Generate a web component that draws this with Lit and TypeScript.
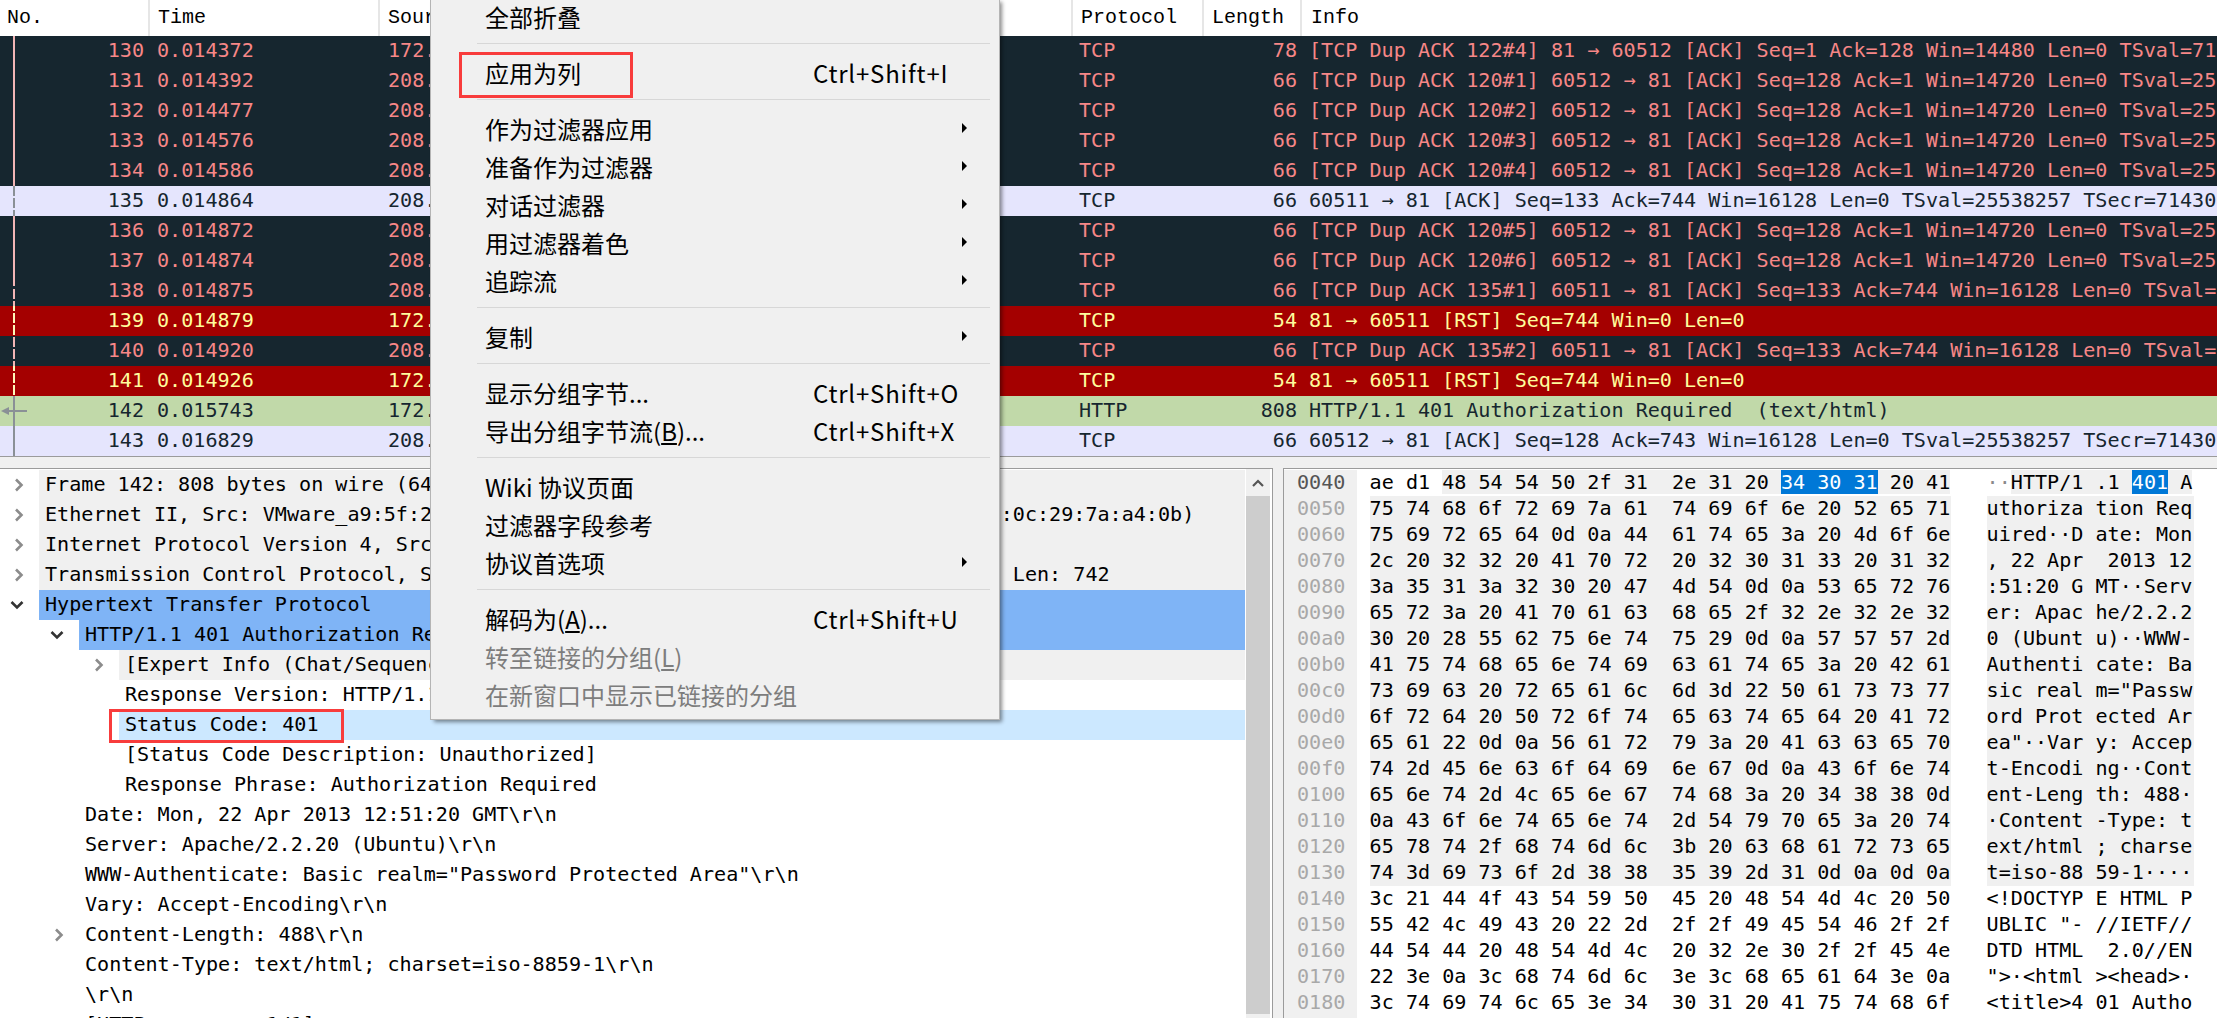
import { LitElement, html, svg, css, nothing } from "lit";
import { customElement } from "lit/decorators.js";

type Pkt = { no: number; time: string; src: string; dst: string; proto: string; len: number; info: string; kind: string };

const A = "172.16.122.128";
const B = "208.80.152.201";
const dup = (n: string, f: string) => `[TCP Dup ACK ${n}] ${f}`;
const s12 = "60512 \u2192 81 [ACK] Seq=128 Ack=1 Win=14720 Len=0 TSval=25538257 TSecr=7143000";
const s11 = "60511 \u2192 81 [ACK] Seq=133 Ack=744 Win=16128 Len=0 TSval=25538257 TSecr=7143000";

const packets: Pkt[] = [
  { no: 130, time: "0.014372", src: A, dst: B, proto: "TCP", len: 78, info: dup("122#4", "81 \u2192 60512 [ACK] Seq=1 Ack=128 Win=14480 Len=0 TSval=7143000 TSecr=25538257"), kind: "bad" },
  { no: 131, time: "0.014392", src: B, dst: A, proto: "TCP", len: 66, info: dup("120#1", s12), kind: "bad" },
  { no: 132, time: "0.014477", src: B, dst: A, proto: "TCP", len: 66, info: dup("120#2", s12), kind: "bad" },
  { no: 133, time: "0.014576", src: B, dst: A, proto: "TCP", len: 66, info: dup("120#3", s12), kind: "bad" },
  { no: 134, time: "0.014586", src: B, dst: A, proto: "TCP", len: 66, info: dup("120#4", s12), kind: "bad" },
  { no: 135, time: "0.014864", src: B, dst: A, proto: "TCP", len: 66, info: "60511 \u2192 81 [ACK] Seq=133 Ack=744 Win=16128 Len=0 TSval=25538257 TSecr=7143000", kind: "tcp" },
  { no: 136, time: "0.014872", src: B, dst: A, proto: "TCP", len: 66, info: dup("120#5", s12), kind: "bad" },
  { no: 137, time: "0.014874", src: B, dst: A, proto: "TCP", len: 66, info: dup("120#6", s12), kind: "bad" },
  { no: 138, time: "0.014875", src: B, dst: A, proto: "TCP", len: 66, info: dup("135#1", s11), kind: "bad" },
  { no: 139, time: "0.014879", src: A, dst: B, proto: "TCP", len: 54, info: "81 \u2192 60511 [RST] Seq=744 Win=0 Len=0", kind: "rst" },
  { no: 140, time: "0.014920", src: B, dst: A, proto: "TCP", len: 66, info: dup("135#2", s11), kind: "bad" },
  { no: 141, time: "0.014926", src: A, dst: B, proto: "TCP", len: 54, info: "81 \u2192 60511 [RST] Seq=744 Win=0 Len=0", kind: "rst" },
  { no: 142, time: "0.015743", src: A, dst: B, proto: "HTTP", len: 808, info: "HTTP/1.1 401 Authorization Required  (text/html)", kind: "http" },
  { no: 143, time: "0.016829", src: B, dst: A, proto: "TCP", len: 66, info: "60512 \u2192 81 [ACK] Seq=128 Ack=743 Win=16128 Len=0 TSval=25538257 TSecr=7143000", kind: "tcp" },
];

type Tree = { t: string; lv: number; arrow?: "r" | "d"; bg?: string };
const tree: Tree[] = [
  { t: "Frame 142: 808 bytes on wire (6464 bits), 808 bytes captured (6464 bits)", lv: 0, arrow: "r", bg: "grey" },
  { t: "Ethernet II, Src: VMware_a9:5f:2e (00:0c:29:a9:5f:2e), Dst: VMware_7a:a4:0b (00:0c:29:7a:a4:0b)", lv: 0, arrow: "r", bg: "grey" },
  { t: "Internet Protocol Version 4, Src: 172.16.122.128, Dst: 172.16.122.1", lv: 0, arrow: "r", bg: "grey" },
  { t: "Transmission Control Protocol, Src Port: 81, Dst Port: 60512, Seq: 1, Ack: 128, Len: 742", lv: 0, arrow: "r", bg: "grey" },
  { t: "Hypertext Transfer Protocol", lv: 0, arrow: "d", bg: "blue" },
  { t: "HTTP/1.1 401 Authorization Required\\r\\n", lv: 1, arrow: "d", bg: "blue" },
  { t: "[Expert Info (Chat/Sequence): HTTP/1.1 401 Authorization Required\\r\\n]", lv: 2, arrow: "r", bg: "grey" },
  { t: "Response Version: HTTP/1.1", lv: 2 },
  { t: "Status Code: 401", lv: 2, bg: "pale" },
  { t: "[Status Code Description: Unauthorized]", lv: 2 },
  { t: "Response Phrase: Authorization Required", lv: 2 },
  { t: "Date: Mon, 22 Apr 2013 12:51:20 GMT\\r\\n", lv: 1 },
  { t: "Server: Apache/2.2.20 (Ubuntu)\\r\\n", lv: 1 },
  { t: 'WWW-Authenticate: Basic realm="Password Protected Area"\\r\\n', lv: 1 },
  { t: "Vary: Accept-Encoding\\r\\n", lv: 1 },
  { t: "Content-Length: 488\\r\\n", lv: 1, arrow: "r" },
  { t: "Content-Type: text/html; charset=iso-8859-1\\r\\n", lv: 1 },
  { t: "\\r\\n", lv: 1 },
  { t: "[HTTP response 1/1]", lv: 1 },
];

const hexRows: [string, string, string, string][] = [
  ["0040", "ae d1 48 54 54 50 2f 31", "2e 31 20 34 30 31 20 41", "\u00b7\u00b7HTTP/1 .1 401 A"],
  ["0050", "75 74 68 6f 72 69 7a 61", "74 69 6f 6e 20 52 65 71", "uthoriza tion Req"],
  ["0060", "75 69 72 65 64 0d 0a 44", "61 74 65 3a 20 4d 6f 6e", "uired\u00b7\u00b7D ate: Mon"],
  ["0070", "2c 20 32 32 20 41 70 72", "20 32 30 31 33 20 31 32", ", 22 Apr  2013 12"],
  ["0080", "3a 35 31 3a 32 30 20 47", "4d 54 0d 0a 53 65 72 76", ":51:20 G MT\u00b7\u00b7Serv"],
  ["0090", "65 72 3a 20 41 70 61 63", "68 65 2f 32 2e 32 2e 32", "er: Apac he/2.2.2"],
  ["00a0", "30 20 28 55 62 75 6e 74", "75 29 0d 0a 57 57 57 2d", "0 (Ubunt u)\u00b7\u00b7WWW-"],
  ["00b0", "41 75 74 68 65 6e 74 69", "63 61 74 65 3a 20 42 61", "Authenti cate: Ba"],
  ["00c0", "73 69 63 20 72 65 61 6c", "6d 3d 22 50 61 73 73 77", 'sic real m="Passw'],
  ["00d0", "6f 72 64 20 50 72 6f 74", "65 63 74 65 64 20 41 72", "ord Prot ected Ar"],
  ["00e0", "65 61 22 0d 0a 56 61 72", "79 3a 20 41 63 63 65 70", 'ea"\u00b7\u00b7Var y: Accep'],
  ["00f0", "74 2d 45 6e 63 6f 64 69", "6e 67 0d 0a 43 6f 6e 74", "t-Encodi ng\u00b7\u00b7Cont"],
  ["0100", "65 6e 74 2d 4c 65 6e 67", "74 68 3a 20 34 38 38 0d", "ent-Leng th: 488\u00b7"],
  ["0110", "0a 43 6f 6e 74 65 6e 74", "2d 54 79 70 65 3a 20 74", "\u00b7Content -Type: t"],
  ["0120", "65 78 74 2f 68 74 6d 6c", "3b 20 63 68 61 72 73 65", "ext/html ; charse"],
  ["0130", "74 3d 69 73 6f 2d 38 38", "35 39 2d 31 0d 0a 0d 0a", "t=iso-88 59-1\u00b7\u00b7\u00b7\u00b7"],
  ["0140", "3c 21 44 4f 43 54 59 50", "45 20 48 54 4d 4c 20 50", "<!DOCTYP E HTML P"],
  ["0150", "55 42 4c 49 43 20 22 2d", "2f 2f 49 45 54 46 2f 2f", 'UBLIC "- //IETF//'],
  ["0160", "44 54 44 20 48 54 4d 4c", "20 32 2e 30 2f 2f 45 4e", "DTD HTML  2.0//EN"],
  ["0170", "22 3e 0a 3c 68 74 6d 6c", "3e 3c 68 65 61 64 3e 0a", '">\u00b7<html ><head>\u00b7'],
  ["0180", "3c 74 69 74 6c 65 3e 34", "30 31 20 41 75 74 68 6f", "<title>4 01 Autho"],
];

type MenuEntry = { label?: unknown; key?: string; sub?: boolean; off?: boolean; sep?: boolean };
const menu: MenuEntry[] = [
  { label: "全部折叠" },
  { sep: true },
  { label: "应用为列", key: "Ctrl+Shift+I" },
  { sep: true },
  { label: "作为过滤器应用", sub: true },
  { label: "准备作为过滤器", sub: true },
  { label: "对话过滤器", sub: true },
  { label: "用过滤器着色", sub: true },
  { label: "追踪流", sub: true },
  { sep: true },
  { label: "复制", sub: true },
  { sep: true },
  { label: "显示分组字节...", key: "Ctrl+Shift+O" },
  { label: html`导出分组字节流(<u>B</u>)...`, key: "Ctrl+Shift+X" },
  { sep: true },
  { label: "Wiki 协议页面" },
  { label: "过滤器字段参考" },
  { label: "协议首选项", sub: true },
  { sep: true },
  { label: html`解码为(<u>A</u>)...`, key: "Ctrl+Shift+U" },
  { label: html`转至链接的分组(<u>L</u>)`, off: true },
  { label: "在新窗口中显示已链接的分组", off: true },
];

@customElement("app-root")
export class AppRoot extends LitElement {
  static styles = css`
    :host {
      display: block;
      position: relative;
      width: 2217px;
      height: 1018px;
      overflow: hidden;
      background: #f0f0f0;
      font-family: "DejaVu Sans Mono", "Liberation Mono", monospace;
      font-size: 20.1px;
      color: #000;
    }
    .page { display: flex; flex-direction: column; height: 100%; }

    .cols { display: grid; grid-template-columns: 150px 230px 693px 131px 98px 1fr; }
    .head { height: 36px; background: #fff; font-family: "Liberation Mono", monospace; font-size: 20px; }
    .head div { border-right: 2px solid #e6e6e6; box-sizing: border-box; line-height: 36px; padding-left: 8px; white-space: pre; overflow: hidden; }
    .head div:last-child { border-right: 0; padding-left: 9px; }
    .head .first { padding-left: 7px; }

    .list { position: relative; flex: none; }
    .row { height: 30px; line-height: 28px; white-space: pre; overflow: hidden; }
    .row > div { overflow: hidden; }
    .row .no { text-align: right; padding-right: 6px; }
    .row .time { padding-left: 7px; }
    .row .src { padding-left: 8px; }
    .row .proto { padding-left: 6px; }
    .row .len { text-align: right; padding-right: 5px; }
    .row .info { padding-left: 7px; }
    .bad { background: #16262f; color: #f78787; }
    .tcp { background: #e5e5fd; color: #16262f; }
    .rst { background: #a40000; color: #fffc9c; }
    .http { background: #c1d9a9; color: #16262f; }
    .mark { position: absolute; left: 13px; top: 0; overflow: visible; }

    .split { height: 12px; background: #f0f0f0; border-top: 1px solid #9b9b9b; box-sizing: border-box; flex: none; }
    .panes { display: flex; flex: 1; min-height: 0; align-items: stretch; }

    .tree-pane { width: 1273px; box-sizing: border-box; background: #fff; border-top: 1px solid #9b9b9b; border-right: 1px solid #9b9b9b; display: flex; flex: none; overflow: hidden; }
    .tree { width: 1245px; padding-top: 1px; flex: none; overflow: hidden; }
    .node { height: 30px; line-height: 28px; display: flex; white-space: pre; }
    .gutter { flex: none; display: flex; align-items: center; justify-content: flex-end; padding-right: 14px; box-sizing: border-box; }
    .gutter svg { display: block; }
    .label { flex: 1; padding-left: 6px; overflow: hidden; }
    .label.grey { background: #f0f0f0; }
    .label.blue { background: #7fb4f6; }
    .label.pale { background: #cce8ff; }

    .bar { width: 24px; margin-left: 1px; margin-right: 2px; flex: none; background: #f0f0f0; padding-top: 1px; display: flex; flex-direction: column; }
    .bar .up { height: 26px; display: flex; align-items: center; justify-content: center; }
    .bar .thumb { height: 518px; background: #cdcdcd; }

    .gap { width: 10px; flex: none; }
    .hex-pane { flex: 1; background: #fff; border-top: 1px solid #9b9b9b; border-left: 1px solid #9b9b9b; padding-top: 1px; overflow: hidden; position: relative; }
    .hexrow { display: flex; height: 26px; line-height: 25px; white-space: pre; }
    .off { width: 60px; padding-left: 13px; background: #f0f0f0; color: #a8a8a8; flex: none; }
    .off.cur { color: #555; }
    .bytes { margin-left: 12.6px; width: 581.5px; flex: none; }
    .ascii { margin-left: 35.5px; width: 207.5px; flex: none; }
    .fill { background: #f0f0f0; }
    .clear { background: #fff; }
    .sel { background: #0078d7; color: #fff; }
    .offtail { height: 2px; width: 73px; background: #f0f0f0; }
    .ctl { color: #8a8a8a; }

    .menu {
      position: absolute;
      left: 431px;
      top: -1px;
      width: 568px;
      box-sizing: border-box;
      background: #f0f0f0;
      box-shadow: 0 0 0 1px #b4b4b4, 3px 3px 4px rgba(0, 0, 0, 0.45);
      padding-bottom: 4px;
      font-family: "Noto Sans CJK SC", "Noto Sans", sans-serif;
      font-size: 24px;
      color: #000;
    }
    .item { height: 38px; box-sizing: border-box; padding-bottom: 3px; line-height: 35px; display: flex; align-items: center; padding-left: 54px; position: relative; }
    .item.off-item { color: #7d7d7d; }
    .text { white-space: pre; }
    .key { position: absolute; left: 382px; letter-spacing: 0.8px; white-space: pre; }
    .arrow { position: absolute; left: 531px; top: 12px; width: 0; height: 0; border-left: 5px solid #000; border-top: 5px solid transparent; border-bottom: 5px solid transparent; }
    .sep { height: 1px; margin: 6px 9px 11px 46px; background: #d7d7d7; }

    .note { position: absolute; box-sizing: border-box; border: 3px solid #f83c3c; pointer-events: none; }
    .note.one { left: 459px; top: 52px; width: 174px; height: 46px; }
    .note.two { left: 109px; top: 709px; width: 235px; height: 34px; }
  `;

  private chevron(kind: "r" | "d") {
    return kind === "r"
      ? html`<svg width="12" height="16" viewBox="0 0 12 16"><path d="M3 2.5 L8.5 8 L3 13.5" fill="none" stroke="#8c8c8c" stroke-width="2.6"/></svg>`
      : html`<svg width="16" height="12" viewBox="0 0 16 12"><path d="M2.5 3 L8 8.5 L13.5 3" fill="none" stroke="#333" stroke-width="2.6"/></svg>`;
  }

  private renderMark() {
    // Relation line in the first column: solid pale pink on dark rows, dashed on the
    // lavender ACK and from row 138 down, solid grey from the selected frame on.
    const pink = "#f2b5b5";
    const cream = "#fff7b8";
    const grey = "#8a9096";
    const dash = (y0: number, y1: number, color: string) => {
      const offset = ((y0 - 1) % 12 + 12) % 12;
      return svg`<path d="M1 ${y0} V${y1}" stroke=${color} stroke-width="2" stroke-dasharray="10 2" stroke-dashoffset=${offset} fill="none"/>`;
    };
    const solid = (y0: number, y1: number, color: string) =>
      svg`<rect x="0" y=${y0} width="2" height=${y1 - y0} fill=${color}/>`;
    return html`<svg class="mark" width="16" height="420" viewBox="0 0 16 420">
      ${solid(0, 150, pink)}
      <path d="M1 150 V180" stroke=${grey} stroke-width="2" stroke-dasharray="10 2" fill="none"/>
      ${solid(180, 250, pink)}
      ${dash(253, 270, pink)}
      ${dash(270, 300, cream)}
      ${dash(300, 330, pink)}
      ${dash(330, 360, cream)}
      ${solid(360, 420, grey)}
      <path d="M3 375 H27" transform="translate(-13 0)" stroke=${grey} stroke-width="2"/>
      <path d="M1 375 L9 371 V379 Z" transform="translate(-13 0)" fill=${grey}/>
    </svg>`;
  }

  private renderAscii(r: string, row: number) {
    if (row === 0) {
      return html`<span class="ascii clear"><span class="ctl">··</span><span class="fill">HTTP/1 .1 </span><span class="sel">401</span><span class="fill"> A</span></span>`;
    }
    return html`<span class="ascii ${row < 16 ? "fill" : ""}">${r}</span>`;
  }

  private renderBytes(a: string, b: string, row: number) {
    if (row === 0) {
      return html`<span class="bytes"><span class="clear">ae d1 </span><span class="fill">48 54 54 50 2f 31  2e 31 20 </span><span class="sel">34 30 31</span><span class="fill"> 20 41</span></span>`;
    }
    return html`<span class="bytes ${row < 16 ? "fill" : ""}">${a}  ${b}</span>`;
  }

  render() {
    return html`
      <div class="page">
        <div class="cols head">
          <div class="first">No.</div><div>Time</div><div>Source</div><div>Protocol</div><div>Length</div><div>Info</div>
        </div>
        <div class="list">
          ${packets.map(
            (p) => html`<div class="cols row ${p.kind}">
              <div class="no">${p.no}</div>
              <div class="time">${p.time}</div>
              <div class="src">${p.src}</div>
              <div class="proto">${p.proto}</div>
              <div class="len">${p.len}</div>
              <div class="info">${p.info}</div>
            </div>`
          )}
          ${this.renderMark()}
        </div>
        <div class="split"></div>
        <div class="panes">
          <div class="tree-pane">
            <div class="tree">
              ${tree.map(
                (n) => html`<div class="node">
                  <span class="gutter" style="width:${39 + n.lv * 40}px">${n.arrow ? this.chevron(n.arrow) : nothing}</span>
                  <span class="label ${n.bg ?? ""}">${n.t}</span>
                </div>`
              )}
            </div>
            <div class="bar">
              <div class="up"><svg width="14" height="10" viewBox="0 0 14 10"><path d="M2 8 L7 3 L12 8" fill="none" stroke="#555" stroke-width="2.2"/></svg></div>
              <div class="thumb"></div>
            </div>
          </div>
          <div class="gap"></div>
          <div class="hex-pane">
            ${hexRows.map(
              (r, i) => html`<div class="hexrow">
                <span class="off ${i === 0 ? "cur" : ""}">${r[0]}</span>
                ${this.renderBytes(r[1], r[2], i)}
                ${this.renderAscii(r[3], i)}
              </div>`
            )}
            <div class="offtail"></div>
          </div>
        </div>

        <div class="menu">
          ${menu.map((m) =>
            m.sep
              ? html`<div class="sep"></div>`
              : html`<div class="item ${m.off ? "off-item" : ""}"><span class="text">${m.label}</span>${m.key ? html`<span class="key">${m.key}</span>` : nothing}${m.sub ? html`<span class="arrow"></span>` : nothing}</div>`
          )}
        </div>
        <div class="note one"></div>
        <div class="note two"></div>
      </div>
    `;
  }
}
